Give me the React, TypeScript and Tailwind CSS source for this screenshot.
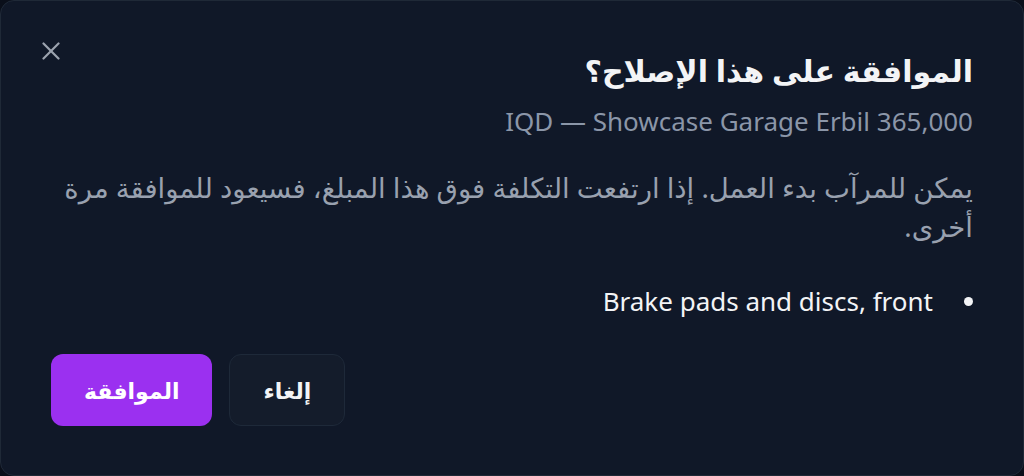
import React from 'react'

export default function App() {
  return (
    <div className="w-[1024px] h-[476px] bg-[#0a0f1a]" style={{ fontFamily: '"Noto Sans", "DejaVu Sans", sans-serif' }}>
      <div dir="rtl" className="relative h-full rounded-[14px] border border-[#1f2937] bg-[#101828] pt-[48px] pr-[50px] pl-[50px]">
        {/* close */}
        <button className="absolute left-[41px] top-[41px] w-[18px] h-[18px] text-[#9ca3af]">
          <svg viewBox="0 0 18 18" width="18" height="18" fill="none" stroke="currentColor" strokeWidth="2.2" strokeLinecap="round">
            <path d="M1.5 1.5 16.5 16.5" />
            <path d="M16.5 1.5 1.5 16.5" />
          </svg>
        </button>

        <h2 className="text-[30px] leading-[44px] font-bold text-[#f3f4f6]">الموافقة على هذا الإصلاح؟</h2>
        <p className="mt-[10px] text-[26px] leading-[36px] text-[#8b96a8]">365,000 IQD — Showcase Garage Erbil</p>

        <p className="mt-[29px] text-[27.5px] leading-[39px] text-[#99a1af]">
          يمكن للمرآب بدء العمل. إذا ارتفعت التكلفة فوق هذا المبلغ، فسيعود للموافقة مرة أخرى.
        </p>

        <ul className="mt-[37px] text-[26px] leading-[36px] text-[#f3f4f6]">
          <li className="flex items-center gap-[31px]">
            <span className="w-[9px] h-[9px] rounded-full bg-[#f3f4f6]" />
            <span>Brake pads and discs, front</span>
          </li>
        </ul>

        <div className="mt-[35px] flex flex-row justify-end gap-[17px]">
          <button className="h-[72px] px-[33px] rounded-[12px] border-[1.5px] border-[#1e2939] bg-[#141c2b] text-[22px] font-bold text-[#f3f4f6]">
            إلغاء
          </button>
          <button className="h-[72px] px-[33px] rounded-[12px] bg-[#9b30f0] text-[22px] font-bold text-white">
            الموافقة
          </button>
        </div>
      </div>
    </div>
  )
}
